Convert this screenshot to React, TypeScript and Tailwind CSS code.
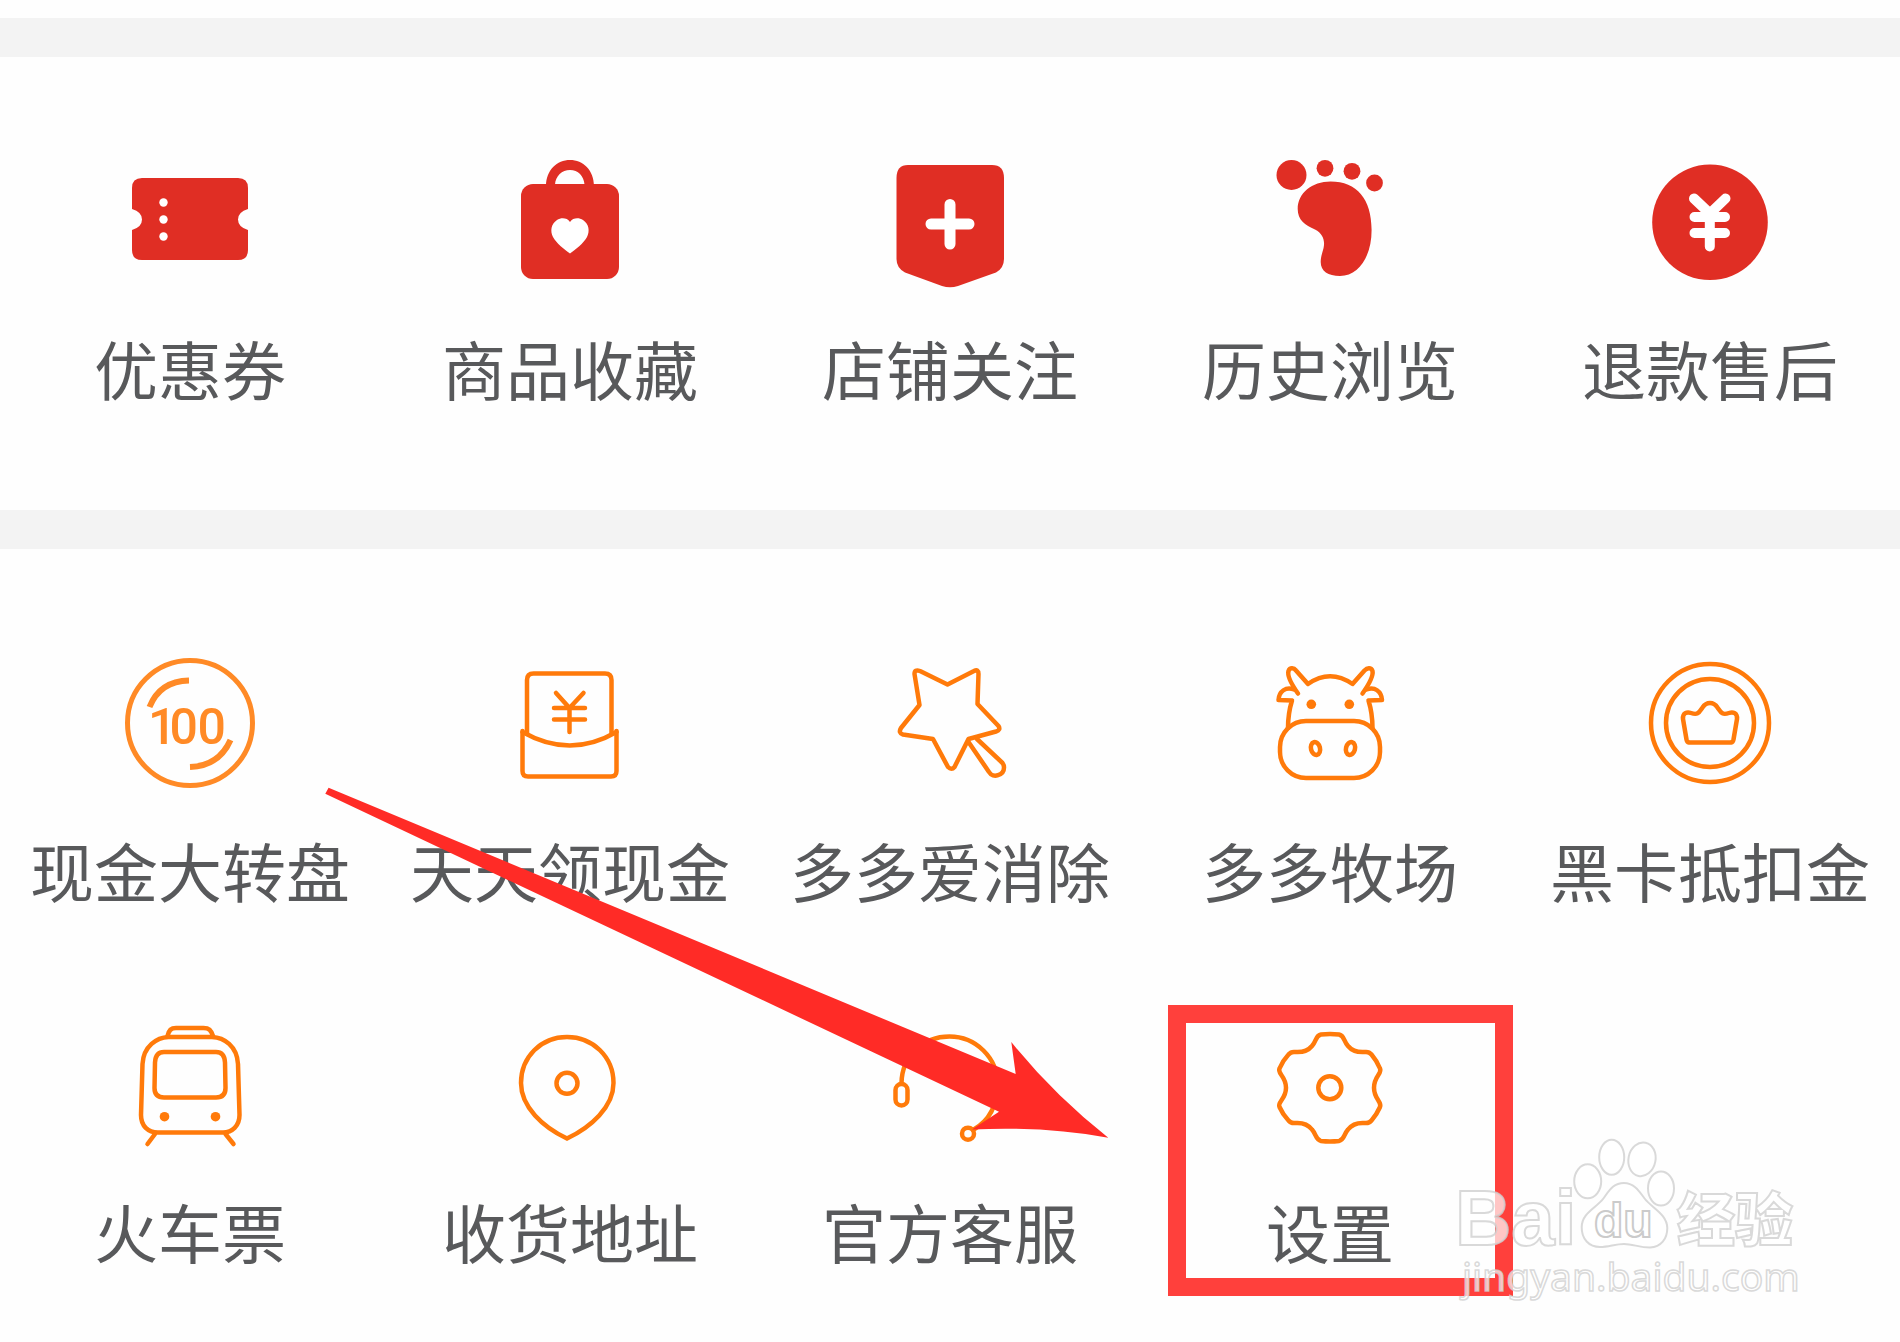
import type { ReactNode } from "react";

const RED = "#e02e24";
const ORANGE = "#ff7a0a";

function Solid({ children }: { children: ReactNode }) {
  return (
    <svg viewBox="0 0 140 140" className="size-[140px]" fill={RED} aria-hidden="true">
      {children}
    </svg>
  );
}

function Outline({ children }: { children: ReactNode }) {
  return (
    <svg
      viewBox="0 0 140 140"
      className="size-[140px]"
      fill="none"
      stroke={ORANGE}
      strokeWidth="4.5"
      strokeLinecap="round"
      strokeLinejoin="round"
      aria-hidden="true"
    >
      {children}
    </svg>
  );
}

const TicketIcon = () => (
  <Solid>
    <path d="M22 27H118Q128 27 128 37V58Q118 61 118 68.500Q118 76 128 79V99Q128 109 118 109H22Q12 109 12 99V79Q22 76 22 68.500Q22 61 12 58V37Q12 27 22 27Z" />
    <g fill="#fff">
      <circle cx="43.500" cy="51.500" r="4.200" />
      <circle cx="43.500" cy="68.500" r="4.200" />
      <circle cx="43.500" cy="85.500" r="4.200" />
    </g>
  </Solid>
);

const BagIcon = () => (
  <Solid>
    <rect x="21" y="33" width="98" height="95" rx="12" />
    <path d="M46 35C46 19 57 9 70 9S94 19 94 35H84.500V33.500C84 25 78 19 70 19S55.500 25 55 33.500V35Z" />
    <path
      fill="#fff"
      d="M70 71C73 66.500 79 66.500 83 69C89 73 90 80 87 86C84 92 75 99 70 102.500C65 99 56 92 53 86C50 80 51 73 57 69C61 66.500 67 66.500 70 71Z"
    />
  </Solid>
);

const ShieldIcon = () => (
  <Solid>
    <path d="M28 14H112Q124 14 124 27V108Q124 117 116 121.500L78 135Q70 137.500 62 135L25 121.500Q16.500 117 16.500 108V27Q16.500 14 28 14Z" />
    <path d="M51 73H89M70 53.500V93" stroke="#fff" strokeWidth="11" strokeLinecap="round" />
  </Solid>
);

const FootIcon = () => (
  <Solid>
    <circle cx="31.500" cy="24" r="15" />
    <circle cx="65" cy="17.300" r="8.400" />
    <circle cx="92" cy="20.300" r="8.400" />
    <circle cx="114.500" cy="32" r="8.400" />
    <path d="M70.600 30.500C52 30.500 37.700 42 37.700 58C37.700 69 45 74 55 78.500C62 82 64.500 88 64 94C63.500 100 60.700 104 60.700 111C60.700 120 68 125 80 125C99 125 111.600 105 111.600 79C111.600 48 97 30.500 70.600 30.500Z" />
  </Solid>
);

const RefundIcon = () => (
  <Solid>
    <circle cx="70" cy="71.300" r="57.800" />
    <path
      d="M54 47.500L69.800 62.500L85.500 47.500M69.800 62.500V95.500M54.500 66H85M54.500 82H85"
      fill="none"
      stroke="#fff"
      strokeWidth="10"
      strokeLinecap="round"
    />
  </Solid>
);

const WheelIcon = () => (
  <Outline>
    <g stroke="#ff8a26">
      <circle cx="70" cy="70" r="62.500" strokeWidth="5" />
      <path d="M29.500 54Q40 28 69 27.500M110.500 87Q99 113 70 114" strokeWidth="6" strokeLinecap="butt" />
    </g>
    <text x="28 49.500 77.500" y="91" fontFamily="Roboto, sans-serif" fontWeight="500" fontSize="50" fill="#ff8a26" stroke="none">
      100
    </text>
  </Outline>
);

const EnvelopeIcon = () => (
  <Outline>
    <path d="M27 81V27Q27 20.500 33.500 20.500H105Q111.500 20.500 111.500 27V81" />
    <path d="M22.500 78V118Q22.500 123.500 28 123.500H111Q116.500 123.500 116.500 118V78" />
    <path d="M22.500 79Q70 106 116.500 79" />
    <path strokeWidth="4.500" d="M56 40L69.500 55L83.500 40M69.500 55V79M54 55H85M54 66.500H85" />
  </Outline>
);

const WandIcon = () => (
  <Outline>
    <path d="M40 18L67.500 31.500L94 18Q98.500 15.500 98.500 21L97.500 51L118.500 73Q121 77 116 78.500L88.500 86L74.500 114Q71.500 117.500 68 114L53 86L23 81.500Q18 80 21 75L39.500 52L34.500 21Q34.500 16 40 18Z" />
    <path d="M88.500 89L109 119C113 126 124 122 124 114.500Q124 112 122.500 110L97 86" />
  </Outline>
);

const CowIcon = () => (
  <Outline>
    <rect x="20" y="68" width="100" height="57" rx="26" />
    <path d="M28 75C28 62 30 54 32 47.500L18.500 47C19 38 26 33.500 34 36.500" />
    <path d="M38 40.500C32 32 27 23 28.500 18C30 14 34 15 36 17.500L48 31Q70 15.500 92.500 31L104.500 17.500C107 15 111 14 112.500 18C113.500 23 108.500 32 102.500 40.500" />
    <path d="M112.500 75C112.500 62 110.500 54 108.500 47.500L122 47C121.500 38 114.500 33.500 106.500 36.500" />
    <ellipse cx="55.500" cy="95.500" rx="4.500" ry="6.500" transform="rotate(-14 55.500 95.500)" />
    <ellipse cx="90.500" cy="95.500" rx="4.500" ry="6.500" transform="rotate(14 90.500 95.500)" />
    <g fill={ORANGE} stroke="none">
      <circle cx="51.300" cy="51.300" r="4.800" />
      <circle cx="89.300" cy="51.300" r="4.800" />
    </g>
  </Outline>
);

const CrownIcon = () => (
  <Outline>
    <circle cx="70" cy="70" r="59" />
    <circle cx="70" cy="70" r="44" />
    <path d="M49 89.500Q47 89 46.500 86.500L43 66C42.500 60 47 58.500 51 60C58 62.500 59 59.500 62.500 54.500C66.500 48.500 73.500 48.500 77.500 54.500C81 59.500 82 62.500 89 60C93 58.500 97.500 60 97 66L93.500 86.500Q93 89 91 89.500Z" />
  </Outline>
);

const TrainIcon = () => (
  <Outline>
    <path d="M48.500 23H92C104 23.500 117 32 118 50L119.500 101C119.500 112 112 118.500 103 118.500H38C28 118.500 21 112 21 101L22.500 50C23.500 32 37 23.500 48.500 23Z" />
    <path d="M47.500 22C49 16 51 14 56 14H83.500C89 14 91 16 93 22" />
    <path d="M44 38H96Q104.500 38 105 48.500L105.500 74Q105.500 83.500 96 83.500H44Q34.500 83.500 34.500 74L35 48.500Q35.500 38 44 38Z" />
    <path d="M35 120L27.500 130M105.500 120L113.500 130" />
    <g fill={ORANGE} stroke="none">
      <circle cx="44.500" cy="102.700" r="4.800" />
      <circle cx="95.500" cy="102.700" r="4.800" />
    </g>
  </Outline>
);

const PinIcon = () => (
  <Outline>
    <path strokeLinejoin="miter" d="M67 23C41 23 21 43 21 69C21 93 43 113 67 124.500C91 113 113.500 93 113.500 69C113.500 43 93 23 67 23Z" />
    <circle cx="67" cy="69.300" r="10.500" />
  </Outline>
);

const HeadsetIcon = () => (
  <Outline>
    <path d="M21.500 69C22 42 43 22.500 69.500 22.500C96 22.500 117.500 44 117.500 70C117.500 91 109 107 93 116" />
    <rect x="15.500" y="70" width="12" height="21.500" rx="6" />
    <circle cx="88" cy="119.700" r="6" />
  </Outline>
);

const GearIcon = () => (
  <Outline>
    <path d="M61 20.500Q70 19.500 79 20.500C84.500 21.500 83.500 27 88 32C93 38 99 38.500 105 38Q109 37.500 111.500 40.500Q117 47 120 54.500C122.500 59.500 114 62 114 73.700C114 85.400 122.500 88 120 93Q117 100 111.500 106.500Q109 109.500 105 109C99 108.500 93 109 88 115.500C83.500 120.500 84.500 126 79 127Q70 128 61 127C55.500 126 56.500 120.500 52 115.500C47 109 41 108.500 35 109Q31 109.500 28.500 106.500Q22.500 100 19.500 93C17 88 26 85.400 26 73.700C26 62 17 59.500 19.500 54.500Q22.500 47 28.500 40.500Q31 37.500 35 38C41 38.500 47 38 52 32C56.500 27 55.500 21.500 61 20.500Z" />
    <circle cx="69.800" cy="73.700" r="11.500" />
  </Outline>
);

type Entry = { label: string; icon: ReactNode; marked?: boolean };

const orders: Entry[] = [
  { label: "优惠券", icon: <TicketIcon /> },
  { label: "商品收藏", icon: <BagIcon /> },
  { label: "店铺关注", icon: <ShieldIcon /> },
  { label: "历史浏览", icon: <FootIcon /> },
  { label: "退款售后", icon: <RefundIcon /> },
];

const services: Entry[] = [
  { label: "现金大转盘", icon: <WheelIcon /> },
  { label: "天天领现金", icon: <EnvelopeIcon /> },
  { label: "多多爱消除", icon: <WandIcon /> },
  { label: "多多牧场", icon: <CowIcon /> },
  { label: "黑卡抵扣金", icon: <CrownIcon /> },
  { label: "火车票", icon: <TrainIcon /> },
  { label: "收货地址", icon: <PinIcon /> },
  { label: "官方客服", icon: <HeadsetIcon /> },
  { label: "设置", icon: <GearIcon />, marked: true },
];

function Tile({ entry }: { entry: Entry }) {
  return (
    <button type="button" className="relative flex flex-col items-center gap-9">
      {entry.icon}
      <span className="text-[64px] leading-[80px] whitespace-nowrap">{entry.label}</span>
      {entry.marked && (
        <span className="absolute -top-[9px] -bottom-[26px] left-7 right-[7px] border-[18px] border-[#ff403c]" />
      )}
    </button>
  );
}

function Arrow() {
  return (
    <svg
      viewBox="320 780 800 370"
      className="pointer-events-none absolute left-[320px] top-[231px] w-[800px]"
      fill="#ff2b26"
      aria-hidden="true"
    >
      <path d="M328.600 787.700L1015.700 1074L1011.300 1042Q1054 1095 1108.300 1137.700Q1045 1126 972 1129.500L999 1111.700L325.300 793.700Z" />
    </svg>
  );
}

function Watermark() {
  return (
    <svg
      viewBox="1450 1130 360 180"
      className="pointer-events-none absolute right-[90px] top-[581px] w-[360px]"
      fill="#fff"
      fillOpacity="0.7"
      stroke="#cfcfcf"
      strokeOpacity="0.8"
      strokeWidth="2"
    >
      <ellipse cx="1587.700" cy="1181.300" rx="13.500" ry="17" />
      <ellipse cx="1611.700" cy="1157.300" rx="12.500" ry="17.500" />
      <ellipse cx="1642" cy="1159.300" rx="13.500" ry="17" transform="rotate(12 1642 1159.300)" />
      <ellipse cx="1661" cy="1188.500" rx="13" ry="17" />
      <path d="M1624 1183C1613 1183 1609 1191 1603 1199C1596 1208 1582 1213 1581.700 1227C1581.500 1239 1589 1247 1600 1247C1609 1247 1615 1244 1624 1244C1633 1244 1639 1247.500 1650 1247.500C1661 1247 1667.300 1239 1667.300 1228C1667 1214 1652 1208 1645 1199C1639 1191 1634 1183 1624 1183Z" />
      <text x="1455" y="1245" fontFamily="Liberation Sans, sans-serif" fontWeight="700" fontSize="78">
        Bai
      </text>
      <text x="1594" y="1237" fontFamily="Liberation Sans, sans-serif" fontWeight="700" fontSize="48" stroke="#bdbdbd">
        du
      </text>
      <text x="1677" y="1241" fontFamily="Noto Sans CJK SC, sans-serif" fontWeight="900" fontSize="58">
        经验
      </text>
      <text x="1462" y="1291" fontFamily="Noto Sans, sans-serif" fontSize="39" strokeWidth="1.500">
        jingyan.baidu.com
      </text>
    </svg>
  );
}

export default function App() {
  return (
    <main className="min-h-screen overflow-x-hidden bg-[#fefefe] pt-[18px] font-['Noto_Sans_CJK_SC',sans-serif] text-[#58595b]">
      <section className="grid grid-cols-5 border-y-[39px] border-[#f3f3f3] pt-[94px] pb-[103px]">
        {orders.map((entry) => (
          <Tile key={entry.label} entry={entry} />
        ))}
      </section>
      <section className="relative grid grid-cols-5 gap-y-[105px] pt-[104px] pb-[72px]">
        {services.map((entry) => (
          <Tile key={entry.label} entry={entry} />
        ))}
        <Arrow />
        <Watermark />
      </section>
    </main>
  );
}
